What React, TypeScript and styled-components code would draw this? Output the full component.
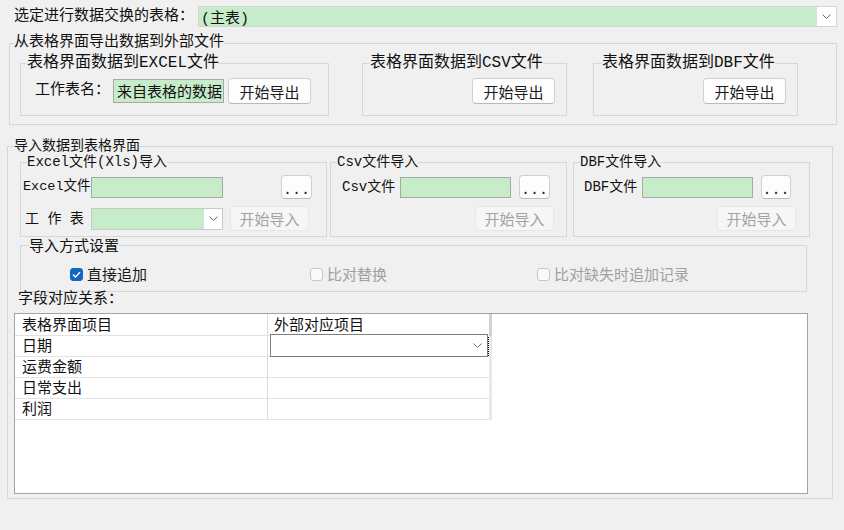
import styled, { createGlobalStyle } from "styled-components";

const SONG = `"Liberation Mono", "Noto Sans CJK SC", monospace`;
const HEI = `"Noto Sans CJK SC", "Noto Sans", sans-serif`;
const GREEN = "#c7ecca";

const GlobalStyle = createGlobalStyle`
  html, body {
    margin: 0;
    padding: 0;
    background: #f0f0f0;
  }
  body {
    font-family: ${HEI};
    font-size: 15px;
    color: #111;
  }
  * {
    box-sizing: border-box;
  }
`;

const Page = styled.div`
  width: 844px;
  height: 530px;
  padding-top: 6px;
  overflow: hidden;
  display: flex;
  flex-direction: column;
  align-items: flex-start;
`;

const TopRow = styled.div`
  display: flex;
  align-items: center;
  height: 21px;
  padding-left: 14px;
`;

const Label = styled.span<{ $w?: number; $size?: number }>`
  flex: none;
  width: ${(p) => (p.$w ? `${p.$w}px` : "auto")};
  font-family: ${SONG};
  font-size: ${(p) => p.$size ?? 15}px;
  line-height: 18px;
  white-space: nowrap;
  color: #111;
`;

const Group = styled.fieldset<{ $x?: number; $top?: number; $w: number; $pad: string }>`
  flex: none;
  margin: ${(p) => p.$top ?? 0}px 0 0 ${(p) => p.$x ?? 0}px;
  padding: ${(p) => p.$pad};
  width: ${(p) => p.$w}px;
  min-width: 0;
  border: 1px solid #d7d7d7;
`;

const Caption = styled.legend<{ $indent: number; $size?: number; $sans?: boolean }>`
  margin-left: ${(p) => p.$indent}px;
  padding: 0;
  font-family: ${(p) => (p.$sans ? HEI : SONG)};
  font-size: ${(p) => p.$size ?? 15}px;
  line-height: 16px;
  white-space: nowrap;
  color: #111;
`;

const GroupRow = styled.div<{ $l: number }>`
  display: flex;
  align-items: stretch;
  padding-left: ${(p) => p.$l}px;
`;

const Stack = styled.div`
  display: flex;
  flex-direction: column;
  gap: 7px;
`;

const Line = styled.div<{ $h: number; $l?: number; $r?: number; $end?: boolean }>`
  display: flex;
  align-items: center;
  height: ${(p) => p.$h}px;
  padding-left: ${(p) => p.$l ?? 0}px;
  padding-right: ${(p) => p.$r ?? 0}px;
  justify-content: ${(p) => (p.$end ? "flex-end" : "flex-start")};
`;

const ComboBox = styled.div<{ $w: number; $h: number; $border: string }>`
  flex: none;
  display: flex;
  width: ${(p) => p.$w}px;
  height: ${(p) => p.$h}px;
  border: 1px solid ${(p) => p.$border};
  background: #fff;
`;

const ComboValue = styled.div<{ $bg: string }>`
  flex: 1;
  display: flex;
  align-items: center;
  padding-left: 2px;
  background: ${(p) => p.$bg};
  font-family: ${SONG};
  font-size: 15px;
  white-space: nowrap;
`;

const ComboArrow = styled.div<{ $w: number }>`
  flex: none;
  width: ${(p) => p.$w}px;
  display: flex;
  align-items: center;
  justify-content: center;
`;

const TextBox = styled.div<{ $w: number; $h: number }>`
  flex: none;
  width: ${(p) => p.$w}px;
  height: ${(p) => p.$h}px;
  padding-left: 3px;
  background: ${GREEN};
  border: 1px solid #a8a8a8;
  font-family: ${HEI};
  font-size: 15px;
  line-height: ${(p) => p.$h - 2}px;
  white-space: nowrap;
  overflow: hidden;
`;

const Button = styled.button<{ $w: number; $h: number; $dots?: boolean; $ml?: number | "auto" }>`
  flex: none;
  width: ${(p) => p.$w}px;
  height: ${(p) => p.$h}px;
  margin: 0 0 0 ${(p) => (p.$ml === "auto" ? "auto" : `${p.$ml ?? 0}px`)};
  padding: ${(p) => (p.$dots ? "6px 0 0" : "0")};
  border: 1px solid #d0d0d0;
  border-bottom-color: #b9b9b9;
  border-radius: 4px;
  background: #fdfdfd;
  color: #1a1a1a;
  font-family: ${(p) => (p.$dots ? SONG : HEI)};
  font-size: 15px;
  line-height: 1;

  &:disabled {
    background: #f6f6f6;
    border-color: #e6e6e6;
    color: #a2a2a2;
  }
`;

const CheckRow = styled.div`
  display: grid;
  grid-template-columns: 240px 227px auto;
  align-items: center;
  height: 20px;
  padding-left: 49px;
`;

const CheckItem = styled.label<{ $off?: boolean }>`
  display: flex;
  align-items: center;
  gap: 4px;
  font-family: ${HEI};
  font-size: 15px;
  line-height: 20px;
  color: ${(p) => (p.$off ? "#a0a0a0" : "#1a1a1a")};
`;

const CheckMark = styled.span<{ $on?: boolean }>`
  flex: none;
  width: 13px;
  height: 13px;
  border-radius: 3px;
  border: 1px solid ${(p) => (p.$on ? "#1167c4" : "#c6c6c6")};
  background: ${(p) => (p.$on ? "#1167c4" : "#fafafa")};
  display: flex;
  align-items: center;
  justify-content: center;
`;

const FieldTitle = styled.div`
  height: 18px;
  margin-bottom: 3px;
  padding-left: 10px;
  font-family: ${SONG};
  font-size: 15px;
  line-height: 16px;
`;

const FieldGrid = styled.div`
  margin-left: 6px;
  width: 794px;
  height: 181px;
  background: #fff;
  border: 1px solid #a3a3a3;
`;

const GridRow = styled.div<{ $h: number }>`
  display: flex;
  height: ${(p) => p.$h}px;
`;

const GridCell = styled.div<{ $w: number; $pad: number; $sep?: boolean }>`
  flex: none;
  display: flex;
  align-items: center;
  width: ${(p) => p.$w}px;
  padding: 0 0 2px ${(p) => p.$pad}px;
  border-bottom: 1px solid #e3e3e3;
  border-right: ${(p) => (p.$sep ? "1px solid #dcdcdc" : "none")};
  font-family: ${HEI};
  font-size: 15px;
  line-height: 18px;
  white-space: nowrap;
`;

const EditCell = styled(GridCell)`
  align-items: flex-start;
  padding-bottom: 0;
`;

const GridEdge = styled.div<{ $dark?: boolean }>`
  flex: none;
  width: 3px;
  background: ${(p) => (p.$dark ? "#d2d2d2" : "#e9e9e9")};
`;

const EditCombo = styled(ComboBox)`
  margin-top: -2px;
`;

const FocusMark = styled.span`
  flex: none;
  width: 0;
  height: 19px;
  margin-top: 1px;
  border-left: 1px dotted #000;
`;

function Chevron() {
  return (
    <svg width="9" height="5" viewBox="0 0 9 5">
      <polyline points="0.5,0.5 4.5,4.5 8.5,0.5" fill="none" stroke="#6a6a6a" strokeWidth="1" />
    </svg>
  );
}

function Tick() {
  return (
    <svg width="9" height="7" viewBox="0 0 9 7">
      <polyline points="1,3.6 3.4,6 8,1.2" fill="none" stroke="#fff" strokeWidth="1.4" />
    </svg>
  );
}

const fields = ["运费金额", "日常支出", "利润"];

function App() {
  return (
    <Page>
      <GlobalStyle />
      <TopRow>
        <Label $w={184}>选定进行数据交换的表格：</Label>
        <ComboBox $w={639} $h={21} $border="#d4d4d4">
          <ComboValue $bg={GREEN}>(主表)</ComboValue>
          <ComboArrow $w={19}>
            <Chevron />
          </ComboArrow>
        </ComboBox>
      </TopRow>

      <Group $x={9} $top={8} $w={828} $pad="4px 0 8px 0">
        <Caption $indent={4}>从表格界面导出数据到外部文件</Caption>
        <GroupRow $l={10}>
          <Group $w={309} $pad="7px 0 11px 0">
            <Caption $indent={6} $size={16}>表格界面数据到EXCEL文件</Caption>
            <Line $h={26} $l={14}>
              <Label $w={78}>工作表名：</Label>
              <TextBox $w={111} $h={24}>来自表格的数据</TextBox>
              <Button $w={83} $h={26} $ml={4}>开始导出</Button>
            </Line>
          </Group>
          <Group $x={33} $w={205} $pad="7px 0 11px 0">
            <Caption $indent={7} $size={16}>表格界面数据到CSV文件</Caption>
            <Line $h={26} $r={11} $end>
              <Button $w={83} $h={26}>开始导出</Button>
            </Line>
          </Group>
          <Group $x={26} $w={205} $pad="7px 0 11px 0">
            <Caption $indent={8} $size={16}>表格界面数据到DBF文件</Caption>
            <Line $h={26} $r={11} $end>
              <Button $w={83} $h={26}>开始导出</Button>
            </Line>
          </Group>
        </GroupRow>
      </Group>

      <Group $x={7} $top={13} $w={826} $pad="0 0 4px 0">
        <Caption $indent={6} $size={14}>导入数据到表格界面</Caption>
        <GroupRow $l={12}>
          <Group $w={307} $pad="5px 0 5px 0">
            <Caption $indent={6} $size={14}>Excel文件(Xls)导入</Caption>
            <Stack>
              <Line $h={24} $l={2} $r={14}>
                <Label $w={68} $size={13.5}>Excel文件</Label>
                <TextBox $w={132} $h={21} />
                <Button $w={31} $h={24} $dots $ml="auto">...</Button>
              </Line>
              <Line $h={25} $l={4}>
                <Label $w={66} $size={14}>工 作 表</Label>
                <ComboBox $w={132} $h={22} $border="#c9c9c9">
                  <ComboValue $bg={GREEN} />
                  <ComboArrow $w={18}>
                    <Chevron />
                  </ComboArrow>
                </ComboBox>
                <Button $w={79} $h={25} $ml={7} disabled>开始导入</Button>
              </Line>
            </Stack>
          </Group>
          <Group $x={3} $w={237} $pad="5px 0 5px 0">
            <Caption $indent={6} $size={14}>Csv文件导入</Caption>
            <Stack>
              <Line $h={24} $l={11}>
                <Label $w={58} $size={14}>Csv文件</Label>
                <TextBox $w={111} $h={21} />
                <Button $w={31} $h={24} $dots $ml={8}>...</Button>
              </Line>
              <Line $h={25} $r={12} $end>
                <Button $w={79} $h={25} disabled>开始导入</Button>
              </Line>
            </Stack>
          </Group>
          <Group $x={6} $w={237} $pad="5px 0 5px 0">
            <Caption $indent={6} $size={14}>DBF文件导入</Caption>
            <Stack>
              <Line $h={24} $l={10}>
                <Label $w={58} $size={14}>DBF文件</Label>
                <TextBox $w={111} $h={21} />
                <Button $w={30} $h={24} $dots $ml={8}>...</Button>
              </Line>
              <Line $h={25} $r={13} $end>
                <Button $w={79} $h={25} disabled>开始导入</Button>
              </Line>
            </Stack>
          </Group>
        </GroupRow>

        <Group $x={12} $w={787} $pad="11px 0 7px 0">
          <Caption $indent={8} $sans>导入方式设置</Caption>
          <CheckRow>
            <CheckItem>
              <CheckMark $on>
                <Tick />
              </CheckMark>
              直接追加
            </CheckItem>
            <CheckItem $off>
              <CheckMark />
              比对替换
            </CheckItem>
            <CheckItem $off>
              <CheckMark />
              比对缺失时追加记录
            </CheckItem>
          </CheckRow>
        </Group>

        <FieldTitle>字段对应关系：</FieldTitle>
        <FieldGrid>
          <GridRow $h={22}>
            <GridCell $w={253} $pad={7} $sep>表格界面项目</GridCell>
            <GridCell $w={221} $pad={6}>外部对应项目</GridCell>
            <GridEdge $dark />
          </GridRow>
          <GridRow $h={21}>
            <GridCell $w={253} $pad={7} $sep>日期</GridCell>
            <EditCell $w={221} $pad={2}>
              <EditCombo $w={218} $h={23} $border="#7d7d7d">
                <ComboValue $bg="#fff" />
                <ComboArrow $w={20}>
                  <Chevron />
                </ComboArrow>
              </EditCombo>
              <FocusMark />
            </EditCell>
            <GridEdge />
          </GridRow>
          {fields.map((name) => (
            <GridRow $h={21} key={name}>
              <GridCell $w={253} $pad={7} $sep>{name}</GridCell>
              <GridCell $w={221} $pad={6} />
              <GridEdge />
            </GridRow>
          ))}
        </FieldGrid>
      </Group>
    </Page>
  );
}

export default App;
